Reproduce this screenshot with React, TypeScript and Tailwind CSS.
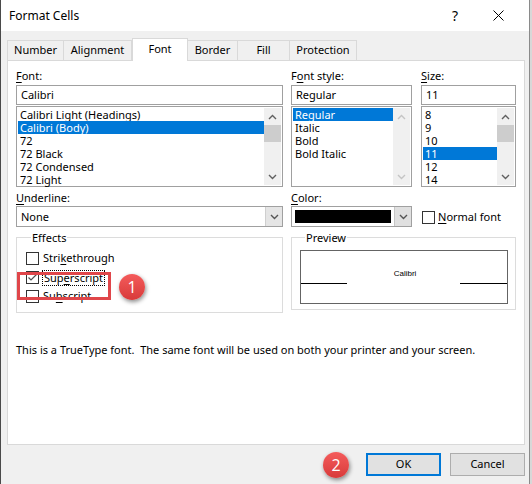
import React from 'react';

const ui = "font-['Segoe_UI','Noto_Sans',sans-serif] text-[11px] text-black";

const Chevron: React.FC<{ dir: 'up' | 'down'; color?: string }> = ({ dir, color = '#606060' }) => (
  <svg width="9" height="6" viewBox="0 0 9 6">
    {dir === 'up' ? (
      <path d="M1 5 L4.5 1.5 L8 5" fill="none" stroke={color} strokeWidth="1.4" />
    ) : (
      <path d="M1 1 L4.5 4.5 L8 1" fill="none" stroke={color} strokeWidth="1.4" />
    )}
  </svg>
);

const Scrollbar: React.FC<{ disabled?: boolean }> = ({ disabled }) => (
  <div className="w-[17px] h-full bg-[#f0f0f0] flex flex-col">
    <div className="h-[17px] flex items-center justify-center">
      <Chevron dir="up" color={disabled ? '#c4c4c4' : '#606060'} />
    </div>
    {!disabled ? <div className="h-[17px] bg-[#cdcdcd]" /> : null}
    <div className="flex-1" />
    <div className="h-[17px] flex items-center justify-center">
      <Chevron dir="down" color={disabled ? '#c4c4c4' : '#606060'} />
    </div>
  </div>
);

const ListBox: React.FC<{ items: string[]; selected: number; disabledScroll?: boolean }> = ({ items, selected, disabledScroll }) => (
  <div className="mt-[1px] h-[81px] border border-[#a0a0a0] bg-white p-[1px] flex">
    <div className="flex-1 flex flex-col">
      {items.map((it, i) => (
        <div
          key={it}
          className={`h-[13px] leading-[13px] pl-[2px] whitespace-nowrap ${i === selected ? 'bg-[#0078d7] text-white' : ''}`}
        >
          {it}
        </div>
      ))}
    </div>
    <Scrollbar disabled={disabledScroll} />
  </div>
);

const TextBox: React.FC<{ value: string }> = ({ value }) => (
  <div className="mt-[1px] h-[20px] border border-[#a0a0a0] bg-white pl-[4px] leading-[18px]">{value}</div>
);

const Label: React.FC<{ pre?: string; u: string; post: string }> = ({ pre, u, post }) => (
  <div className="h-[17px] leading-[17px] whitespace-nowrap">
    {pre}
    <span className="underline underline-offset-2">{u}</span>
    {post}
  </div>
);

const CheckBox: React.FC<{ checked?: boolean }> = ({ checked }) => (
  <div className="w-[13px] h-[13px] border border-[#333333] bg-white flex items-center justify-center shrink-0">
    {checked ? (
      <svg width="11" height="11" viewBox="0 0 11 11">
        <path d="M1.5 5.5 L4 8 L9.5 2.5" fill="none" stroke="#505050" strokeWidth="1.2" />
      </svg>
    ) : null}
  </div>
);

const Badge: React.FC<{ n: string }> = ({ n }) => (
  <div className="w-[26px] h-[26px] rounded-full bg-gradient-to-b from-[#f45b5b] to-[#d83a3a] shadow-[1px_2px_4px_rgba(0,0,0,0.45)] flex items-center justify-center text-white text-[16px] font-['Open_Sans',sans-serif]">
    {n}
  </div>
);

const tabs = [
  { name: 'Number', w: 'w-[57px]' },
  { name: 'Alignment', w: 'w-[69px]' },
  { name: 'Font', w: 'w-[56px]' },
  { name: 'Border', w: 'w-[51px]' },
  { name: 'Fill', w: 'w-[53px]' },
  { name: 'Protection', w: 'w-[68px]' },
];

const App: React.FC = () => {
  return (
    <div className={`w-[532px] h-[484px] flex bg-[#d8d8d8] ${ui}`}>
      <div className="w-[530px] h-full bg-[#f0f0f0] border-l border-[#4a4a4a] border-r border-r-[#8a8a8a] flex flex-col">
        {/* title bar */}
        <div className="h-[31px] bg-white flex items-center">
          <div className="pl-[8px] flex-1 text-[12px]">Format Cells</div>
          <div className="w-[40px] text-[14px] text-center ml-[4px]">?</div>
          <div className="w-[46px] flex items-center justify-center mr-[8px]">
            <svg width="11" height="11" viewBox="0 0 11 11">
              <path d="M0.5 0.5 L10.5 10.5 M10.5 0.5 L0.5 10.5" stroke="#000" strokeWidth="1" />
            </svg>
          </div>
        </div>

        {/* tabs */}
        <div className="h-[29px] pl-[6px] flex items-end">
          {tabs.map((t) =>
            t.name === 'Font' ? (
              <div
                key={t.name}
                className={`${t.w} h-[23px] -mb-[1px] relative z-10 bg-white border border-b-0 border-[#d9d9d9] flex items-center justify-center pb-[2px]`}
              >
                {t.name}
              </div>
            ) : (
              <div
                key={t.name}
                className={`${t.w} h-[20px] bg-[#f0f0f0] border border-b-0 border-[#d9d9d9] -ml-[1px] first:ml-0 flex items-center justify-center`}
              >
                {t.name}
              </div>
            )
          )}
        </div>

        {/* panel */}
        <div className="ml-[6px] w-[518px] h-[385px] bg-white border border-[#d9d9d9] pt-[6px] pl-[8px]">
          <div className="flex">
            <div className="w-[267px]">
              <Label u="F" post="ont:" />
              <TextBox value="Calibri" />
              <ListBox
                items={['Calibri Light (Headings)', 'Calibri (Body)', '72', '72 Black', '72 Condensed', '72 Light']}
                selected={1}
              />
            </div>
            <div className="w-[121px] ml-[8px]">
              <Label pre="F" u="o" post="nt style:" />
              <TextBox value="Regular" />
              <ListBox items={['Regular', 'Italic', 'Bold', 'Bold Italic']} selected={0} disabledScroll />
            </div>
            <div className="w-[95px] ml-[9px]">
              <Label u="S" post="ize:" />
              <TextBox value="11" />
              <ListBox items={['8', '9', '10', '11', '12', '14']} selected={3} />
            </div>
          </div>

          <div className="flex mt-[2px]">
            <div className="w-[267px]">
              <Label u="U" post="nderline:" />
              <div className="h-[21px] border border-[#a0a0a0] bg-white flex">
                <div className="flex-1 pl-[4px] leading-[19px]">None</div>
                <div className="w-[17px] bg-[#e5e5e5] border-l border-[#cfcfcf] flex items-center justify-center">
                  <Chevron dir="down" color="#555" />
                </div>
              </div>
            </div>
            <div className="w-[121px] ml-[8px]">
              <Label u="C" post="olor:" />
              <div className="h-[21px] border border-[#a0a0a0] bg-white flex">
                <div className="flex-1 p-[3px]">
                  <div className="w-full h-full bg-black" />
                </div>
                <div className="w-[17px] bg-[#e0e0e0] border-l border-[#c6c6c6] flex items-center justify-center">
                  <Chevron dir="down" color="#555" />
                </div>
              </div>
            </div>
            <div className="ml-[10px] pt-[20px] flex items-center gap-[3px] h-[37px]">
              <CheckBox />
              <span>
                <span className="underline underline-offset-2">N</span>ormal font
              </span>
            </div>
          </div>

          <div className="flex mt-[3px]">
            <fieldset className="w-[267px] h-[83px] border border-[#dcdcdc] pl-[9px] pt-[4px] relative">
              <legend className="ml-[5px] px-[1px] leading-[15px]">Effects</legend>
              <div className="h-[19px] flex items-center gap-[4px]">
                <CheckBox />
                <span>
                  Stri<span className="underline underline-offset-2">k</span>ethrough
                </span>
              </div>
              <div className="h-[19px] flex items-center gap-[3px]">
                <CheckBox checked />
                <span className="border border-dotted border-black px-[1px] leading-[14px]">
                  Sup<span className="underline underline-offset-2">e</span>rscript
                </span>
              </div>
              <div className="h-[19px] flex items-center gap-[4px]">
                <CheckBox />
                <span>
                  Su<span className="underline underline-offset-2">b</span>script
                </span>
              </div>
              <div className="absolute left-[0px] top-[27px] w-[94px] h-[28px] border-[3px] border-[#e0464a]" />
              <div className="absolute left-[102px] top-[29px]">
                <Badge n="1" />
              </div>
            </fieldset>
            <fieldset className="w-[225px] h-[80px] ml-[8px] border border-[#dcdcdc] pl-[8px] pt-[5px]">
              <legend className="ml-[5px] px-[1px] leading-[15px]">Preview</legend>
              <div className="w-[208px] h-[54px] border border-[#646464] flex flex-col">
                <div className="h-[17px]" />
                <div className="h-[12px] text-[8px] leading-[12px] text-center font-['Liberation_Sans',sans-serif] pl-[2px]">Calibri</div>
                <div className="h-[3px]" />
                <div className="flex justify-between">
                  <div className="w-[46px] border-t border-black" />
                  <div className="w-[47px] border-t border-black" />
                </div>
              </div>
            </fieldset>
          </div>

          <div className="mt-[29px] leading-[15px] whitespace-nowrap">
            This is a TrueType font.&nbsp; The same font will be used on both your printer and your screen.
          </div>
        </div>

        {/* buttons */}
        <div className="flex-1 flex items-start justify-end pt-[8px] pr-[4px]">
          <div className="mr-[17px] mt-[-1px]">
            <Badge n="2" />
          </div>
          <div className="w-[75px] h-[23px] bg-[#e1e1e1] border-2 border-[#0078d7] flex items-center justify-center">OK</div>
          <div className="w-[75px] h-[23px] ml-[9px] bg-[#e1e1e1] border border-[#adadad] flex items-center justify-center">Cancel</div>
        </div>
      </div>
    </div>
  );
};

export default App;
